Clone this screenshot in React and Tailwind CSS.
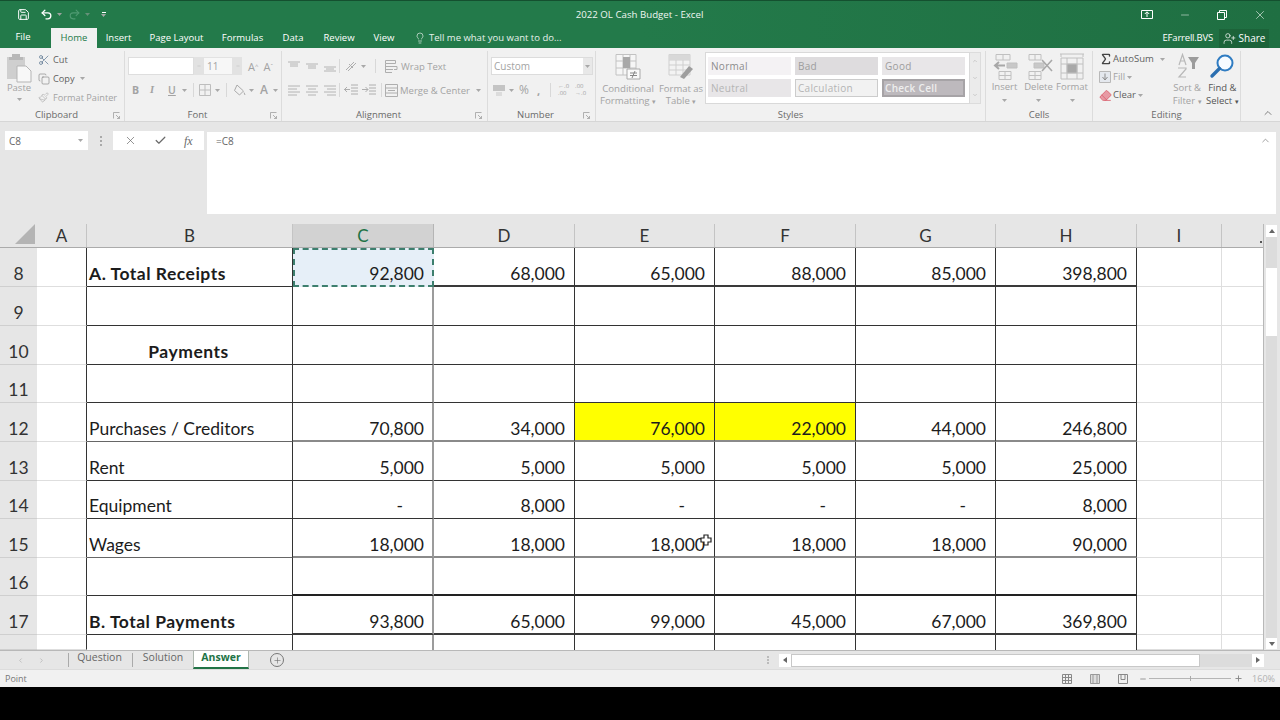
import React from "react";
import { Undo2, Redo2, X, Check, Lightbulb, UserPlus, Minus, Plus, ChevronUp, ChevronDown, Scissors, Copy, Paintbrush, Eraser, ChevronLeft, ChevronRight, Sigma, Save } from "lucide-react";

const COLS = "grid grid-cols-[37px_50px_206px_141px_141px_140px_141px_140px_141px_85px_41px]";

const THIN = "border-b border-b-[#333333]";
const rows = [
  { n: 8, h: "h-[39px]", bb: "border-b-2 border-b-[#3a3a3a]", pb: "pb-0", bt: THIN, b: "A. Total Receipts", bold: true, v: ["92,800", "68,000", "65,000", "88,000", "85,000", "398,800"] },
  { n: 9, h: "h-[39px]", bb: THIN, pb: "pb-[1px]", bt: THIN },
  { n: 10, h: "h-[39px]", bb: THIN, pb: "pb-[1px]", bt: THIN, b: "Payments", bold: true, center: true },
  { n: 11, h: "h-[38px]", bb: THIN, pb: "pb-[1px]", bt: THIN },
  { n: 12, h: "h-[39px]", bb: "border-b-2 border-b-[#8a8a8a]", pb: "pb-0", bt: "border-b border-b-[#666666]", b: "Purchases / Creditors", v: ["70,800", "34,000", "76,000", "22,000", "44,000", "246,800"] },
  { n: 13, h: "h-[39px]", bb: THIN, pb: "pb-[1px]", bt: THIN, b: "Rent", v: ["5,000", "5,000", "5,000", "5,000", "5,000", "25,000"] },
  { n: 14, h: "h-[38px]", bb: THIN, pb: "pb-[1px]", bt: THIN, b: "Equipment", v: ["-", "8,000", "-", "-", "-", "8,000"] },
  { n: 15, h: "h-[39px]", bb: "border-b-2 border-b-[#8a8a8a]", pb: "pb-0", bt: "border-b border-b-[#666666]", b: "Wages", v: ["18,000", "18,000", "18,000", "18,000", "18,000", "90,000"] },
  { n: 16, h: "h-[38px]", bb: "border-b-2 border-b-[#222222]", pb: "pb-0", bt: THIN },
  { n: 17, h: "h-[39px]", bb: "border-b-2 border-b-[#3a3a3a]", pb: "pb-0", bt: THIN, b: "B. Total Payments", bold: true, v: ["93,800", "65,000", "99,000", "45,000", "67,000", "369,800"] },
  { n: "", h: "h-[15px]", bb: "", pb: "pb-0", bt: "" },
];

const RIGHT = [
  "border-r-2 border-r-[#9c9c9c]",
  "border-r border-r-[#333333]",
  "border-r border-r-[#333333]",
  "border-r border-r-[#333333]",
  "border-r border-r-[#333333]",
  "border-r border-r-[#333333]",
];

function Launcher() {
  return (
    <svg width="7" height="7" viewBox="0 0 7 7" className="shrink-0">
      <path d="M0.5 6.5V0.5H6.5M3 3L6.5 6.5M6.5 4V6.5H4" fill="none" stroke="#a0a0a0" strokeWidth="0.8" />
    </svg>
  );
}

function Caret({ className = "" }) {
  return (
    <svg width="5" height="3" viewBox="0 0 5 3" className={"shrink-0 " + className}>
      <path d="M0 0H5L2.5 3Z" fill="#a8a8a8" />
    </svg>
  );
}

function Group({ w, label, launcher, labelClass = "", children }) {
  return (
    <div className={"flex flex-col h-full border-r border-[#dcdcdc] shrink-0 " + w}>
      <div className="flex-1 min-h-0">{children}</div>
      <div className={"h-[14px] pt-[2px] flex items-center text-[#6a6a6a] text-[9.5px] leading-none " + labelClass}>
        <span className="flex-1 text-center">{label}</span>
        {launcher ? <Launcher /> : null}
      </div>
    </div>
  );
}

function Lines({ kind }) {
  const map = {
    top: ["M1 2H13", "M3 4H11", "M3 6H11"],
    mid: ["M1 4H13", "M3 6H11", "M3 8H11"],
    bot: ["M1 7H13", "M3 9H11", "M1 11H13"],
    left: ["M1 2H13", "M1 5H10", "M1 8H13", "M1 11H10"],
    center: ["M1 2H13", "M3 5H11", "M1 8H13", "M3 11H11"],
    right: ["M1 2H13", "M4 5H13", "M1 8H13", "M4 11H13"],
  };
  return (
    <svg width="14" height="13" viewBox="0 0 14 13">
      <path d={map[kind].join("")} stroke="#b4b4b4" strokeWidth="1" fill="none" />
    </svg>
  );
}

function StyleCell({ className, children }) {
  return <div className={"w-[83px] h-[18px] flex items-center text-[10px] leading-none tracking-[0.3px] " + className}>{children}</div>;
}

function CellIcon({ kind }) {
  return (
    <svg width="28" height="28" viewBox="0 0 28 28">
      {kind === "insert" && (
        <g fill="none" stroke="#c0c0c0">
          <path d="M5 1.5H19V7H5ZM12 1.5V7M8 18.5H20V26.5H8ZM14 18.5V26.5M8 22.5H20" />
          <path d="M16 10H26V15H16Z" fill="#c8c8c8" />
          <path d="M14 12.5H5M8 9L4 12.5L8 16" stroke="#a8a8a8" strokeWidth="2" />
        </g>
      )}
      {kind === "delete" && (
        <g fill="none" stroke="#c0c0c0">
          <path d="M4 1.5H16V7H4ZM10 1.5V7M4 18.5H16V26.5H4ZM10 18.5V26.5M4 22.5H16" />
          <path d="M9 10H19V15H9Z" fill="#c8c8c8" />
          <path d="M17 7L27 18M27 7L17 18" stroke="#a8a8a8" strokeWidth="1.6" />
        </g>
      )}
      {kind === "format" && (
        <g fill="none" stroke="#c0c0c0">
          <path d="M2 1H26M3 1V4M25 1V4" />
          <path d="M3 5H25V26H3ZM9 5V26M19 5V26M3 11H25M3 20H25" />
          <path d="M9 11H19V20H9Z" fill="#a8a8a8" />
        </g>
      )}
    </svg>
  );
}

export default function App() {
  return (
    <div className="w-[1280px] h-[720px] overflow-hidden bg-black font-['Open_Sans',sans-serif] relative">
      {/* Title bar */}
      <div className="h-[48px] bg-linear-to-r from-[#237a4a] via-[#237a4a] to-[#1f6f42] border-t border-[#14502f] text-white">
        <div className="h-[27px] flex items-center relative">
          <div className="flex items-center pl-[17px] w-[200px]">
            <Save size={13} strokeWidth={1.8} color="#ffffff" />
            <Undo2 size={13} strokeWidth={2.4} color="#ffffff" className="ml-[10px]" />
            <Caret className="ml-[4px] opacity-90" />
            <Redo2 size={13} strokeWidth={2} color="#4f9a72" className="ml-[6px]" />
            <Caret className="ml-[4px] opacity-50" />
            <span className="ml-[11px] flex flex-col items-center gap-[1px]">
              <span className="w-[4px] h-[1px] bg-white" />
              <Caret className="opacity-100" />
            </span>
          </div>
          <div className="flex-1 text-center text-[9.7px] leading-none text-[#eef6f1] mr-[1px]">2022 OL Cash Budget - Excel</div>
          <div className="flex items-center w-[200px] justify-end pr-[13px] gap-[26px]">
            <svg width="12" height="11" viewBox="0 0 12 11"><path d="M0.5 1.5H11.5V9.5H0.5Z" fill="none" stroke="#fff" /><path d="M6 8V3M3.8 5L6 2.8L8.2 5" fill="none" stroke="#fff" /></svg>
            <Minus size={12} strokeWidth={1} color="#fff" />
            <svg width="10" height="10" viewBox="0 0 10 10"><path d="M0.5 2.5H7.5V9.5H0.5ZM2.5 2.5V0.5H9.5V7.5H7.5" fill="none" stroke="#fff" /></svg>
            <X size={14} strokeWidth={1} color="#fff" />
          </div>
        </div>
        <div className="h-[20px] flex items-stretch text-[9.5px] relative">
          <div className="w-[46px] flex items-center justify-center pb-[1px]">File</div>
          <div className="w-[46px] ml-[5px] bg-[#f1f1f1] text-[#237a4a] flex items-center justify-center">Home</div>
          <div className="w-[43px] flex items-center justify-center">Insert</div>
          <div className="w-[73px] flex items-center justify-center">Page Layout</div>
          <div className="w-[59px] flex items-center justify-center">Formulas</div>
          <div className="w-[42px] flex items-center justify-center">Data</div>
          <div className="w-[50px] flex items-center justify-center">Review</div>
          <div className="w-[40px] flex items-center justify-center">View</div>
          <div className="flex items-center ml-[10px]">
            <Lightbulb size={12} strokeWidth={1.2} color="#fff" />
            <span className="ml-[3px] text-[#e6f1ea]">Tell me what you want to do...</span>
          </div>
          <div className="ml-auto flex items-center pr-[11px]">
            <span className="text-[9.5px] tracking-[-0.2px]">EFarrell.BVS</span>
            <div className="ml-[6px] w-[50px] h-[19px] bg-[#1c6339] flex items-center justify-center gap-[3px]">
              <UserPlus size={13} strokeWidth={1.3} color="#fff" />
              <span className="text-[10px]">Share</span>
            </div>
          </div>
        </div>
      </div>

      {/* Ribbon */}
      <div className="h-[74px] bg-[#f1f1f1] border-b border-[#d6d6d6] pt-[3px] flex text-[9.5px] leading-none text-[#a3a3a3] relative">
        <Group w="w-[125px]" label="Clipboard" launcher labelClass="pr-[4px]">
          <div className="flex">
            <div className="w-[38px] flex flex-col items-center pt-[2px]">
              <svg width="26" height="30" viewBox="0 0 26 30">
                <path d="M1 4H19V26H1Z" fill="#cfcfcf" />
                <path d="M6 4V1H14V4H17V7H3V4Z" fill="#b8b8b8" />
                <path d="M11 13H20L25 18V29H11Z" fill="#f8f8f8" stroke="#b5b5b5" />
              </svg>
              <span className="mt-[0px] text-[9.5px]">Paste</span>
              <Caret className="mt-[5px]" />
            </div>
            <div className="flex flex-col text-[9.2px]">
              <div className="h-[18px] flex items-center text-[#5f5f5f]">
                <Scissors size={12} strokeWidth={1.3} color="#4d6a88" /><span className="ml-[3px]">Cut</span>
              </div>
              <div className="h-[19px] flex items-center text-[#5f5f5f]">
                <Copy size={12} strokeWidth={1.1} color="#707070" /><span className="ml-[3px]">Copy</span><Caret className="ml-[5px]" />
              </div>
              <div className="h-[19px] flex items-center">
                <Paintbrush size={11} strokeWidth={1.3} color="#aaaaaa" /><span className="ml-[4px]">Format Painter</span>
              </div>
            </div>
          </div>
        </Group>

        <Group w="w-[157px]" label="Font" launcher labelClass="pr-[4px]">
          <div className="pl-[3px] pt-[6px] flex flex-col">
            <div className="flex items-center h-[18px]">
              <div className="w-[66px] h-[18px] bg-white border border-[#dedede]" />
              <div className="w-[9px] h-[18px] bg-[#e2e2e2] flex items-center justify-center"><Minus size={4} color="#aaa" /></div>
              <div className="w-[30px] h-[18px] bg-[#f7f7f7] border border-[#e2e2e2] pl-[3px] flex items-center text-[10px]">11</div>
              <div className="w-[9px] h-[18px] bg-[#e2e2e2] flex items-center justify-center"><Minus size={4} color="#aaa" /></div>
              <span className="ml-[6px] text-[11px]">A<sup className="text-[6px]">^</sup></span>
              <span className="ml-[5px] text-[11px]">A<sup className="text-[6px]">ˇ</sup></span>
            </div>
            <div className="flex items-center h-[18px] mt-[6px] text-[10.5px]">
              <span className="ml-[4px] w-[18px] font-bold">B</span>
              <span className="w-[18px] italic font-bold font-['Liberation_Serif',serif]">I</span>
              <span className="w-[12px] underline font-semibold">U</span>
              <Caret className="ml-[2px]" />
              <span className="ml-[6px] w-px h-[14px] bg-[#d8d8d8]" />
              <svg width="12" height="12" viewBox="0 0 12 12" className="ml-[5px]"><path d="M0.5 0.5H11.5V11.5H0.5ZM6 0.5V11.5M0.5 6H11.5" stroke="#bdbdbd" fill="none" /></svg>
              <Caret className="ml-[4px]" />
              <span className="ml-[6px] w-px h-[14px] bg-[#d8d8d8]" />
              <svg width="13" height="13" viewBox="0 0 13 13" className="ml-[6px]"><path d="M4 1L10.5 7L6.5 11L1.5 6.5ZM11 8.5L12 11" stroke="#aaa" fill="none" /></svg>
              <Caret className="ml-[3px]" />
              <span className="ml-[6px] text-[12px] font-semibold">A</span>
              <Caret className="ml-[5px]" />
            </div>
          </div>
        </Group>

        <Group w="w-[206px]" label="Alignment" launcher labelClass="pr-[5px]">
          <div className="pl-[5px] pt-[6px] flex flex-col">
            <div className="flex items-center h-[18px]">
              <span className="w-[18px]"><Lines kind="top" /></span>
              <span className="w-[18px]"><Lines kind="mid" /></span>
              <span className="w-[16px]"><Lines kind="bot" /></span>
              <span className="w-px h-[14px] bg-[#d8d8d8]" />
              <svg width="14" height="13" viewBox="0 0 14 13" className="ml-[4px]"><path d="M2 10L10 2M4 11L12 3M5 4L9 8" stroke="#aeaeae" fill="none" /></svg>
              <Caret className="ml-[3px]" />
              <span className="ml-[9px] w-px h-[14px] bg-[#d8d8d8]" />
              <svg width="15" height="13" viewBox="0 0 15 13" className="ml-[9px]"><path d="M0.5 0.5H10.5V3.5H0.5ZM0.5 3.5V12.5H7M0.5 6.5H12M0.5 9.5H8M12 6.5L12 9.5H9" stroke="#aeaeae" fill="none" /></svg>
              <span className="ml-[1px] mt-px">Wrap Text</span>
            </div>
            <div className="flex items-center h-[18px] mt-[6px]">
              <span className="w-[18px]"><Lines kind="left" /></span>
              <span className="w-[18px]"><Lines kind="center" /></span>
              <span className="w-[16px]"><Lines kind="right" /></span>
              <span className="w-px h-[14px] bg-[#d8d8d8]" />
              <svg width="14" height="12" viewBox="0 0 14 12" className="ml-[4px]"><path d="M7 1H14M7 4H14M7 7H14M7 10H14M6 5.5H0M3 3L0.5 5.5L3 8" stroke="#aeaeae" fill="none" /></svg>
              <svg width="14" height="12" viewBox="0 0 14 12" className="ml-[4px]"><path d="M7 1H14M7 4H14M7 7H14M7 10H14M0 5.5H6M3.5 3L6 5.5L3.5 8" stroke="#aeaeae" fill="none" /></svg>
              <span className="ml-[5px] w-px h-[14px] bg-[#d8d8d8]" />
              <svg width="13" height="13" viewBox="0 0 13 13" className="ml-[3px] mr-[2px]"><path d="M0.5 0.5H12.5V12.5H0.5ZM0.5 4H12.5M0.5 9H12.5M3 6.5H10" stroke="#aeaeae" fill="none" /></svg>
              <span className="whitespace-nowrap mt-px">Merge &amp; Center</span>
              <Caret className="ml-[6px]" />
            </div>
          </div>
        </Group>

        <Group w="w-[108px]" label="Number" launcher labelClass="pr-[5px]">
          <div className="pl-[3px] pt-[6px] flex flex-col">
            <div className="w-[102px] h-[18px] bg-white border border-[#dcdcdc] flex items-center pl-[2px] text-[10px]">
              <span className="flex-1">Custom</span>
              <span className="w-[9px] h-full bg-[#e8e8e8] flex items-center justify-center"><Caret /></span>
            </div>
            <div className="flex items-center h-[18px] mt-[6px]">
              <svg width="14" height="13" viewBox="0 0 14 13" className="ml-[1px]"><path d="M1 1H13V7H1Z" fill="#c4c4c4" /><path d="M4 8H10V12H4Z" fill="#dcdcdc" /></svg>
              <Caret className="ml-[3px]" />
              <span className="ml-[5px] text-[12px]">%</span>
              <span className="ml-[8px] text-[11px] font-bold">,</span>
              <span className="ml-[10px] w-px h-[14px] bg-[#d8d8d8]" />
              <span className="ml-[7px] text-[6px] leading-[7px] w-[15px]">←.0<br />.00</span>
              <span className="ml-[2px] text-[6px] leading-[7px] w-[15px]">.00<br />→.0</span>
            </div>
          </div>
        </Group>

        <Group w="w-[390px]" label="Styles">
          <div className="flex pl-[2px]">
            <div className="w-[60px] flex flex-col items-center text-[9.7px] text-center pt-[3px]">
              <svg width="26" height="26" viewBox="0 0 26 26"><path d="M1 0.5H21V21H1ZM1 7H21M1 14H21M8 0.5V21M15 0.5V21" stroke="#c2c2c2" fill="#f6f6f6" /><path d="M8 3H15V14H8Z" fill="#a8a8a8" /><path d="M12 15H25V25H12Z" fill="#fafafa" stroke="#aaa" /><path d="M15 19H22M15 21.5H22M20 17L17 24" stroke="#888" fill="none" /></svg>
              <span className="mt-[2px] whitespace-nowrap leading-[13px]">Conditional</span>
              <span className="whitespace-nowrap leading-[12px]">Formatting <span className="text-[7px]">▾</span></span>
            </div>
            <div className="w-[46px] flex flex-col items-center text-[9.5px] text-center pt-[3px]">
              <svg width="26" height="26" viewBox="0 0 26 26"><path d="M1 0.5H22V21H1ZM1 6H22M1 11H22M1 16H22M8 0.5V21M15 0.5V21" stroke="#cfcfcf" fill="#f3f3f3" /><path d="M1 0.5H22V6H1Z" fill="#d8d8d8" /><path d="M12 23L21 12L25 15L16 25Z" fill="#9e9e9e" /></svg>
              <span className="mt-[2px] whitespace-nowrap leading-[13px]">Format as</span>
              <span className="whitespace-nowrap leading-[12px]">Table <span className="text-[7px]">▾</span></span>
            </div>
            <div className="ml-[1px] mt-px flex h-[52px]">
              <div className="w-[265px] h-[52px] bg-white border border-[#d9d9d9] grid grid-cols-[83px_83px_83px] content-start gap-x-[4px] gap-y-[4px] pt-[4px] pl-[2px]">
                <StyleCell className="pl-[3px] bg-[#f4f2f4] text-[#8c8c8c]">Normal</StyleCell>
                <StyleCell className="pl-[3px] bg-[#dedcde] text-[#9d9d9d]">Bad</StyleCell>
                <StyleCell className="pl-[3px] bg-[#e8e6e8] text-[#9d9d9d]">Good</StyleCell>
                <StyleCell className="pl-[3px] bg-[#e8e6e8] text-[#b4b4b4]">Neutral</StyleCell>
                <StyleCell className="pl-[2px] bg-[#f2f2f2] text-[#b4b4b4] border border-[#cccccc]">Calculation</StyleCell>
                <StyleCell className="pl-[1px] bg-[#bdb9bd] text-[#eeeeee] border-2 border-[#a6a3a6] font-semibold">Check Cell</StyleCell>
              </div>
              <div className="w-[11px] h-[52px] bg-[#ebebeb] border border-l-0 border-[#dcdcdc] flex flex-col items-center justify-around">
                <ChevronUp size={6} color="#aaa" />
                <ChevronDown size={6} color="#aaa" />
                <ChevronDown size={6} color="#aaa" />
              </div>
            </div>
          </div>
        </Group>

        <Group w="w-[107px]" label="Cells">
          <div className="flex pl-[2px] text-[10px]">
            {[["insert", "Insert", "w-[33px]"], ["delete", "Delete", "w-[35px]"], ["format", "Format", "w-[32px]"]].map(([k, l, w]) => (
              <div key={k} className={"flex flex-col items-center pt-[2px] " + w}>
                <CellIcon kind={k} />
                <span className="mt-[1px] text-[9.5px] whitespace-nowrap">{l}</span>
                <Caret className="mt-[7px]" />
              </div>
            ))}
          </div>
        </Group>

        <Group w="w-[148px]" label="Editing">
          <div className="flex pl-[6px]">
            <div className="w-[72px] flex flex-col -mt-px text-[#5f5f5f] text-[9.5px]">
              <div className="h-[18px] flex items-center"><Sigma size={14} strokeWidth={2.4} color="#444" /><span className="ml-[0px]">AutoSum</span><Caret className="ml-[6px]" /></div>
              <div className="h-[18px] flex items-center text-[#a3a3a3]">
                <svg width="12" height="12" viewBox="0 0 12 12" className="mr-[2px]"><path d="M0.5 0.5H11.5V11.5H0.5Z" fill="#e4e8ee" stroke="#b8b8b8" /><path d="M6 2.5V8.5M3.5 6L6 9L8.5 6" fill="none" stroke="#8b8b8b" /></svg>
                Fill <Caret className="ml-[2px]" />
              </div>
              <div className="h-[18px] flex items-center"><Eraser size={13} strokeWidth={1.6} color="#d9606e" fill="#e79aa4" /><span className="ml-[1px]">Clear</span><Caret className="ml-[2px]" /></div>
            </div>
            <div className="w-[36px] flex flex-col items-center text-center text-[9.5px] pt-[2px]">
              <svg width="26" height="26" viewBox="0 0 26 26"><path d="M5 12L8.5 1.5L12 12M6 8H11M4 15H12V16L5 24H12" stroke="#b8b8b8" strokeWidth="1.2" fill="none" /><path d="M14 4H25L21 10V16H18V10Z" fill="#9c9c9c" /></svg>
              <span className="mt-[2px] whitespace-nowrap leading-[13px]">Sort &amp;</span>
              <span className="whitespace-nowrap leading-[13px]">Filter <span className="text-[7px]">▾</span></span>
            </div>
            <div className="w-[36px] flex flex-col items-center text-center text-[9.5px] text-[#555] pt-[2px]">
              <svg width="26" height="26" viewBox="0 0 26 26"><circle cx="16" cy="10" r="7.5" fill="#f7fbff" stroke="#2f7cc2" strokeWidth="2" /><path d="M10.5 15.5L3 23" stroke="#2b6fb0" strokeWidth="3.4" strokeLinecap="round" /></svg>
              <span className="mt-[2px] whitespace-nowrap leading-[13px]">Find &amp;</span>
              <span className="whitespace-nowrap leading-[13px]">Select <span className="text-[7px]">▾</span></span>
            </div>
          </div>
        </Group>

        <div className="flex-1 flex items-end justify-end pr-[6px] pb-[2px]">
          <ChevronUp size={12} strokeWidth={1.6} color="#666" />
        </div>
      </div>

      {/* Formula area */}
      <div className="h-[102px] bg-[#e6e6e6] flex items-start text-[10px] leading-none text-[#666]">
        <div className="ml-[5px] mt-[9px] w-[83px] h-[19px] bg-white flex items-center pl-[4px] pr-[5px]">
          <span className="flex-1">C8</span><Caret />
        </div>
        <div className="w-[25px] mt-[9px] h-[19px] flex flex-col items-center justify-center gap-[2px]">
          <span className="w-[2px] h-[2px] bg-[#aaa]" /><span className="w-[2px] h-[2px] bg-[#aaa]" /><span className="w-[2px] h-[2px] bg-[#aaa]" />
        </div>
        <div className="mt-[9px] w-[91px] h-[19px] bg-white flex items-center justify-around px-[3px]">
          <X size={13} strokeWidth={1.3} color="#6a6a6a" />
          <Check size={13} strokeWidth={2.2} color="#6a6a6a" />
          <span className="font-['Liberation_Serif',serif] italic text-[12px] text-[#6a6a6a]">fx</span>
        </div>
        <div className="ml-[3px] mt-[10px] w-[1069px] h-[82px] bg-white flex items-start pl-[9px] pt-[4px] pr-[5px]">
          <span className="flex-1">=C8</span>
          <ChevronUp size={11} strokeWidth={1.5} color="#777" className="mt-[-1px]" />
        </div>
      </div>

      {/* Sheet */}
      <div className="flex h-[426px] bg-white">
        <div className="w-[1263px] flex flex-col font-['Lato',sans-serif] text-[#1c1c1c]">
          <div className={COLS + " h-[24px] bg-[#e6e6e6] text-[17px] leading-none text-[#333] border-b border-[#ababab]"}>
            <div className="flex items-end justify-end pr-[2px] pb-[3px]">
              <svg width="20" height="20" viewBox="0 0 20 20"><path d="M20 0V20H0Z" fill="#b4b4b4" /></svg>
            </div>
            {["A", "B", "C", "D", "E", "F", "G", "H", "I"].map((c, i) => (
              <div
                key={i}
                className={
                  "flex items-center justify-center border-r " +
                  (c === "C" ? "bg-[#d2d2d2] text-[#217346] border-[#b5b5b5]" : "border-[#c4c4c4]")
                }
              >
                {c}
              </div>
            ))}
            <div className="flex items-end justify-end pr-[1px] pb-[4px]">
              <span className="w-[2px] h-[2px] bg-[#555]" />
            </div>
          </div>
          <div className="flex-1 overflow-hidden relative text-[17.5px] leading-[22px]">
            {rows.map((r) => (
              <div key={r.n} className={COLS + " " + r.h}>
                <div className="bg-[#e6e6e6] border-b border-[#cfcfcf] flex items-end justify-center pb-[1px] text-[#333]">{r.n}</div>
                <div className="border-r border-r-[#333333] border-b border-b-[#dedede]" />
                <div
                  className={
                    "border-r border-r-[#333333] flex items-end pl-[2px] pb-[1px] " +
                    r.bt + " " +
                    (r.bold ? "font-bold tracking-[0.5px] " : "") +
                    (r.center ? "justify-center pr-[4px]" : "")
                  }
                >
                  {r.b}
                </div>
                {[0, 1, 2, 3, 4, 5].map((i) => {
                  const val = r.v ? r.v[i] : "";
                  const yellow = r.n === 12 && (i === 2 || i === 3);
                  const selected = r.n === 8 && i === 0;
                  return (
                    <div
                      key={i}
                      className={
                        "flex items-end justify-end " + r.pb + " " +
                        (selected
                          ? "bg-[#e6eff8] border-2 border-dashed border-[#3d7f6e] pr-[8px] "
                          : RIGHT[i] + " " + r.bb + " ") +
                        (yellow ? "bg-[#ffff00] " : "") +
                        (!selected ? (val === "-" ? "pr-[29px]" : i === 0 ? "pr-[8px]" : "pr-[9px]") : "")
                      }
                    >
                      {val}
                    </div>
                  );
                })}
                <div className="border-r border-b border-[#dedede]" />
                <div className="border-b border-[#dedede]" />
              </div>
            ))}
            <svg width="12" height="12" viewBox="0 0 12 12" className="absolute left-[700px] top-[286px]">
              <path d="M4 1H8V4H11V8H8V11H4V8H1V4H4Z" fill="#fff" stroke="#222" strokeWidth="1.2" />
            </svg>
          </div>
        </div>
        <div className="w-[17px] bg-[#e6e6e6] border-l border-[#b8b8b8] pl-[2px] pr-[3px] flex flex-col">
          <div className="h-[12px] mt-[1px] bg-white flex items-center justify-center">
            <svg width="6" height="4" viewBox="0 0 6 4"><path d="M0 4L3 0L6 4Z" fill="#666" /></svg>
          </div>
          <div className="flex-1 bg-[#dcdcdc] pt-[31px]">
            <div className="h-[68px] bg-white" />
          </div>
          <div className="h-[11px] mb-[1px] bg-white flex items-center justify-center">
            <svg width="6" height="4" viewBox="0 0 6 4"><path d="M0 0L3 4L6 0Z" fill="#666" /></svg>
          </div>
        </div>
      </div>

      {/* Sheet tabs */}
      <div className="h-[19px] bg-[#e6e6e6] border-t border-[#b8b8b8] flex items-center text-[10.5px] leading-none text-[#666]">
        <div className="w-[68px] flex items-center pl-[17px] gap-[14px] h-full">
          <ChevronLeft size={7} strokeWidth={3} color="#bbb" />
          <ChevronRight size={7} strokeWidth={3} color="#bbb" />
        </div>
        <div className="h-[14px] border-l border-[#aaa] w-[64px] flex items-center justify-center pb-[5px] pr-[2px]">Question</div>
        <div className="h-[14px] border-l border-[#aaa] w-[61px] flex items-center justify-center pb-[5px]">Solution</div>
        <div className="h-[18px] w-[56px] bg-white border-x border-b-2 border-[#aeb8b0] border-b-[#217346] text-[#217346] font-bold flex items-center justify-center pb-[4px]">Answer</div>
        <div className="ml-[21px] w-[14px] h-[14px] rounded-full border border-[#777] flex items-center justify-center">
          <Plus size={9} strokeWidth={1.5} color="#666" />
        </div>
        <div className="ml-[483px] flex flex-col gap-[1px] w-[9px]">
          <span className="w-[2px] h-[2px] bg-[#bbb]" /><span className="w-[2px] h-[2px] bg-[#bbb]" /><span className="w-[2px] h-[2px] bg-[#bbb]" />
        </div>
        <div className="ml-[3px] w-[12px] h-[13px] bg-white flex items-center justify-center">
          <svg width="4" height="6" viewBox="0 0 4 6"><path d="M4 0L0 3L4 6Z" fill="#666" /></svg>
        </div>
        <div className="w-[409px] h-[13px] bg-white border border-[#c8c8c8]" />
        <div className="w-[52px] h-[13px] bg-[#dcdcdc]" />
        <div className="w-[12px] h-[13px] bg-white flex items-center justify-center">
          <svg width="4" height="6" viewBox="0 0 4 6"><path d="M0 0L4 3L0 6Z" fill="#666" /></svg>
        </div>
      </div>

      {/* Status bar */}
      <div className="h-[18px] bg-[#f1f1f1] border-t border-[#dcdcdc] flex items-center text-[9px] leading-none text-[#777] pl-[5px]">
        <span>Point</span>
        <div className="ml-auto flex items-center pr-[5px]">
          <svg width="10" height="10" viewBox="0 0 10 10"><path d="M0.5 0.5H9.5V9.5H0.5ZM3.5 0.5V9.5M6.5 0.5V9.5M0.5 3.5H9.5M0.5 6.5H9.5" stroke="#888" fill="none" /></svg>
          <svg width="10" height="10" viewBox="0 0 10 10" className="ml-[18px]"><path d="M0.5 0.5H9.5V9.5H0.5Z" stroke="#999" fill="#ddd" /><path d="M3 0.5V9.5M7 0.5V9.5" stroke="#999" /></svg>
          <svg width="10" height="10" viewBox="0 0 10 10" className="ml-[18px]"><path d="M0.5 0.5H9.5V9.5H0.5ZM3 0.5V5.5H7V0.5" stroke="#888" fill="none" /></svg>
          <Minus size={8} strokeWidth={2.5} color="#888" className="ml-[11px]" />
          <div className="ml-[2px] w-[82px] h-px bg-[#b5b5b5] flex justify-center items-center">
            <span className="w-px h-[5px] bg-[#aaa]" />
          </div>
          <Plus size={9} strokeWidth={2.5} color="#888" className="ml-[3px]" />
          <span className="ml-[9px] text-[#b0b0b0]">160%</span>
        </div>
      </div>
    </div>
  );
}
